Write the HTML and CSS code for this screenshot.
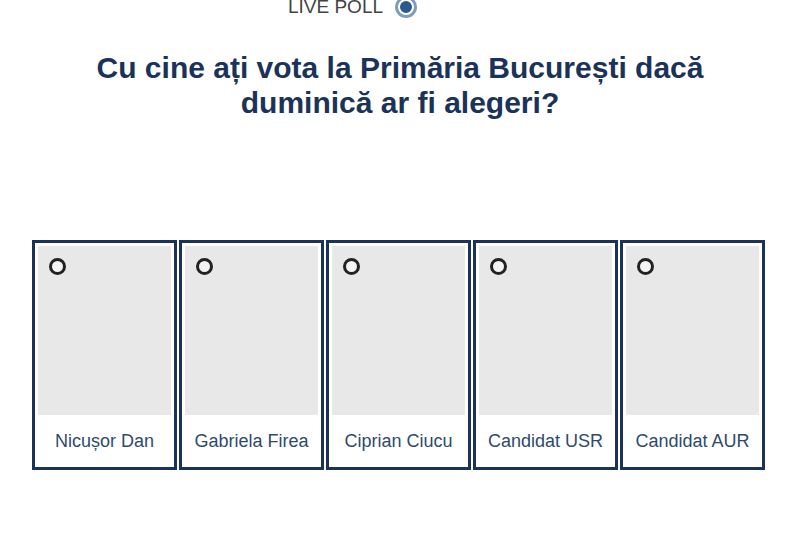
FILE: index.html
```html
<!DOCTYPE html>
<html lang="ro">
<head>
<meta charset="utf-8">
<link rel="stylesheet" href="styles.css">
</head>
<body>
<div class="page">
  <div class="live">
    <span class="live-text">LIVE POLL</span>
    <span class="live-dot"></span>
  </div>
  <h1 class="question">Cu cine ați vota la Primăria București dacă<br>duminică ar fi alegeri?</h1>
  <div class="options">
    <div class="card"><div class="photo"><span class="radio"></span></div><div class="name">Nicușor Dan</div></div>
    <div class="card"><div class="photo"><span class="radio"></span></div><div class="name">Gabriela Firea</div></div>
    <div class="card"><div class="photo"><span class="radio"></span></div><div class="name">Ciprian Ciucu</div></div>
    <div class="card"><div class="photo"><span class="radio"></span></div><div class="name">Candidat USR</div></div>
    <div class="card"><div class="photo"><span class="radio"></span></div><div class="name">Candidat AUR</div></div>
  </div>
</div>
</body>
</html>
```
FILE: styles.css
```css
html, body {
  margin: 0;
  padding: 0;
  background: #ffffff;
}
.page {
  width: 800px;
  height: 533px;
  overflow: hidden;
  font-family: "Liberation Sans", Arial, sans-serif;
}
.live {
  display: flex;
  align-items: center;
  justify-content: center;
  gap: 15px;
  height: 18px;
  margin-top: -2px;
  padding-right: 98px;
}
.live-text {
  font-size: 19px;
  line-height: 18px;
  color: #444444;
}
.live-dot {
  width: 12px;
  height: 12px;
  border-radius: 50%;
  background: #2c5a8c;
  border: 2px solid #ffffff;
  box-shadow: 0 0 0 3px #7f9cbc;
}
.question {
  margin: 34px 0 0 0;
  text-align: center;
  font-size: 30px;
  line-height: 35px;
  font-weight: bold;
  color: #1b3358;
}
.options {
  display: flex;
  gap: 2px;
  margin: 120px 0 0 32px;
}
.card {
  width: 139px;
  height: 224px;
  border: 3px solid #1b3358;
  display: flex;
  flex-direction: column;
}
.photo {
  height: 169px;
  margin: 3px 3px 0 3px;
  background: #e8e8e8;
  position: relative;
}
.radio {
  position: absolute;
  left: 11px;
  top: 12px;
  width: 11px;
  height: 11px;
  border: 3px solid #222222;
  border-radius: 50%;
  background: #f4f4f4;
}
.name {
  flex: 1;
  text-align: center;
  font-size: 18px;
  color: #2e4a6e;
  padding-top: 16px;
}
```
